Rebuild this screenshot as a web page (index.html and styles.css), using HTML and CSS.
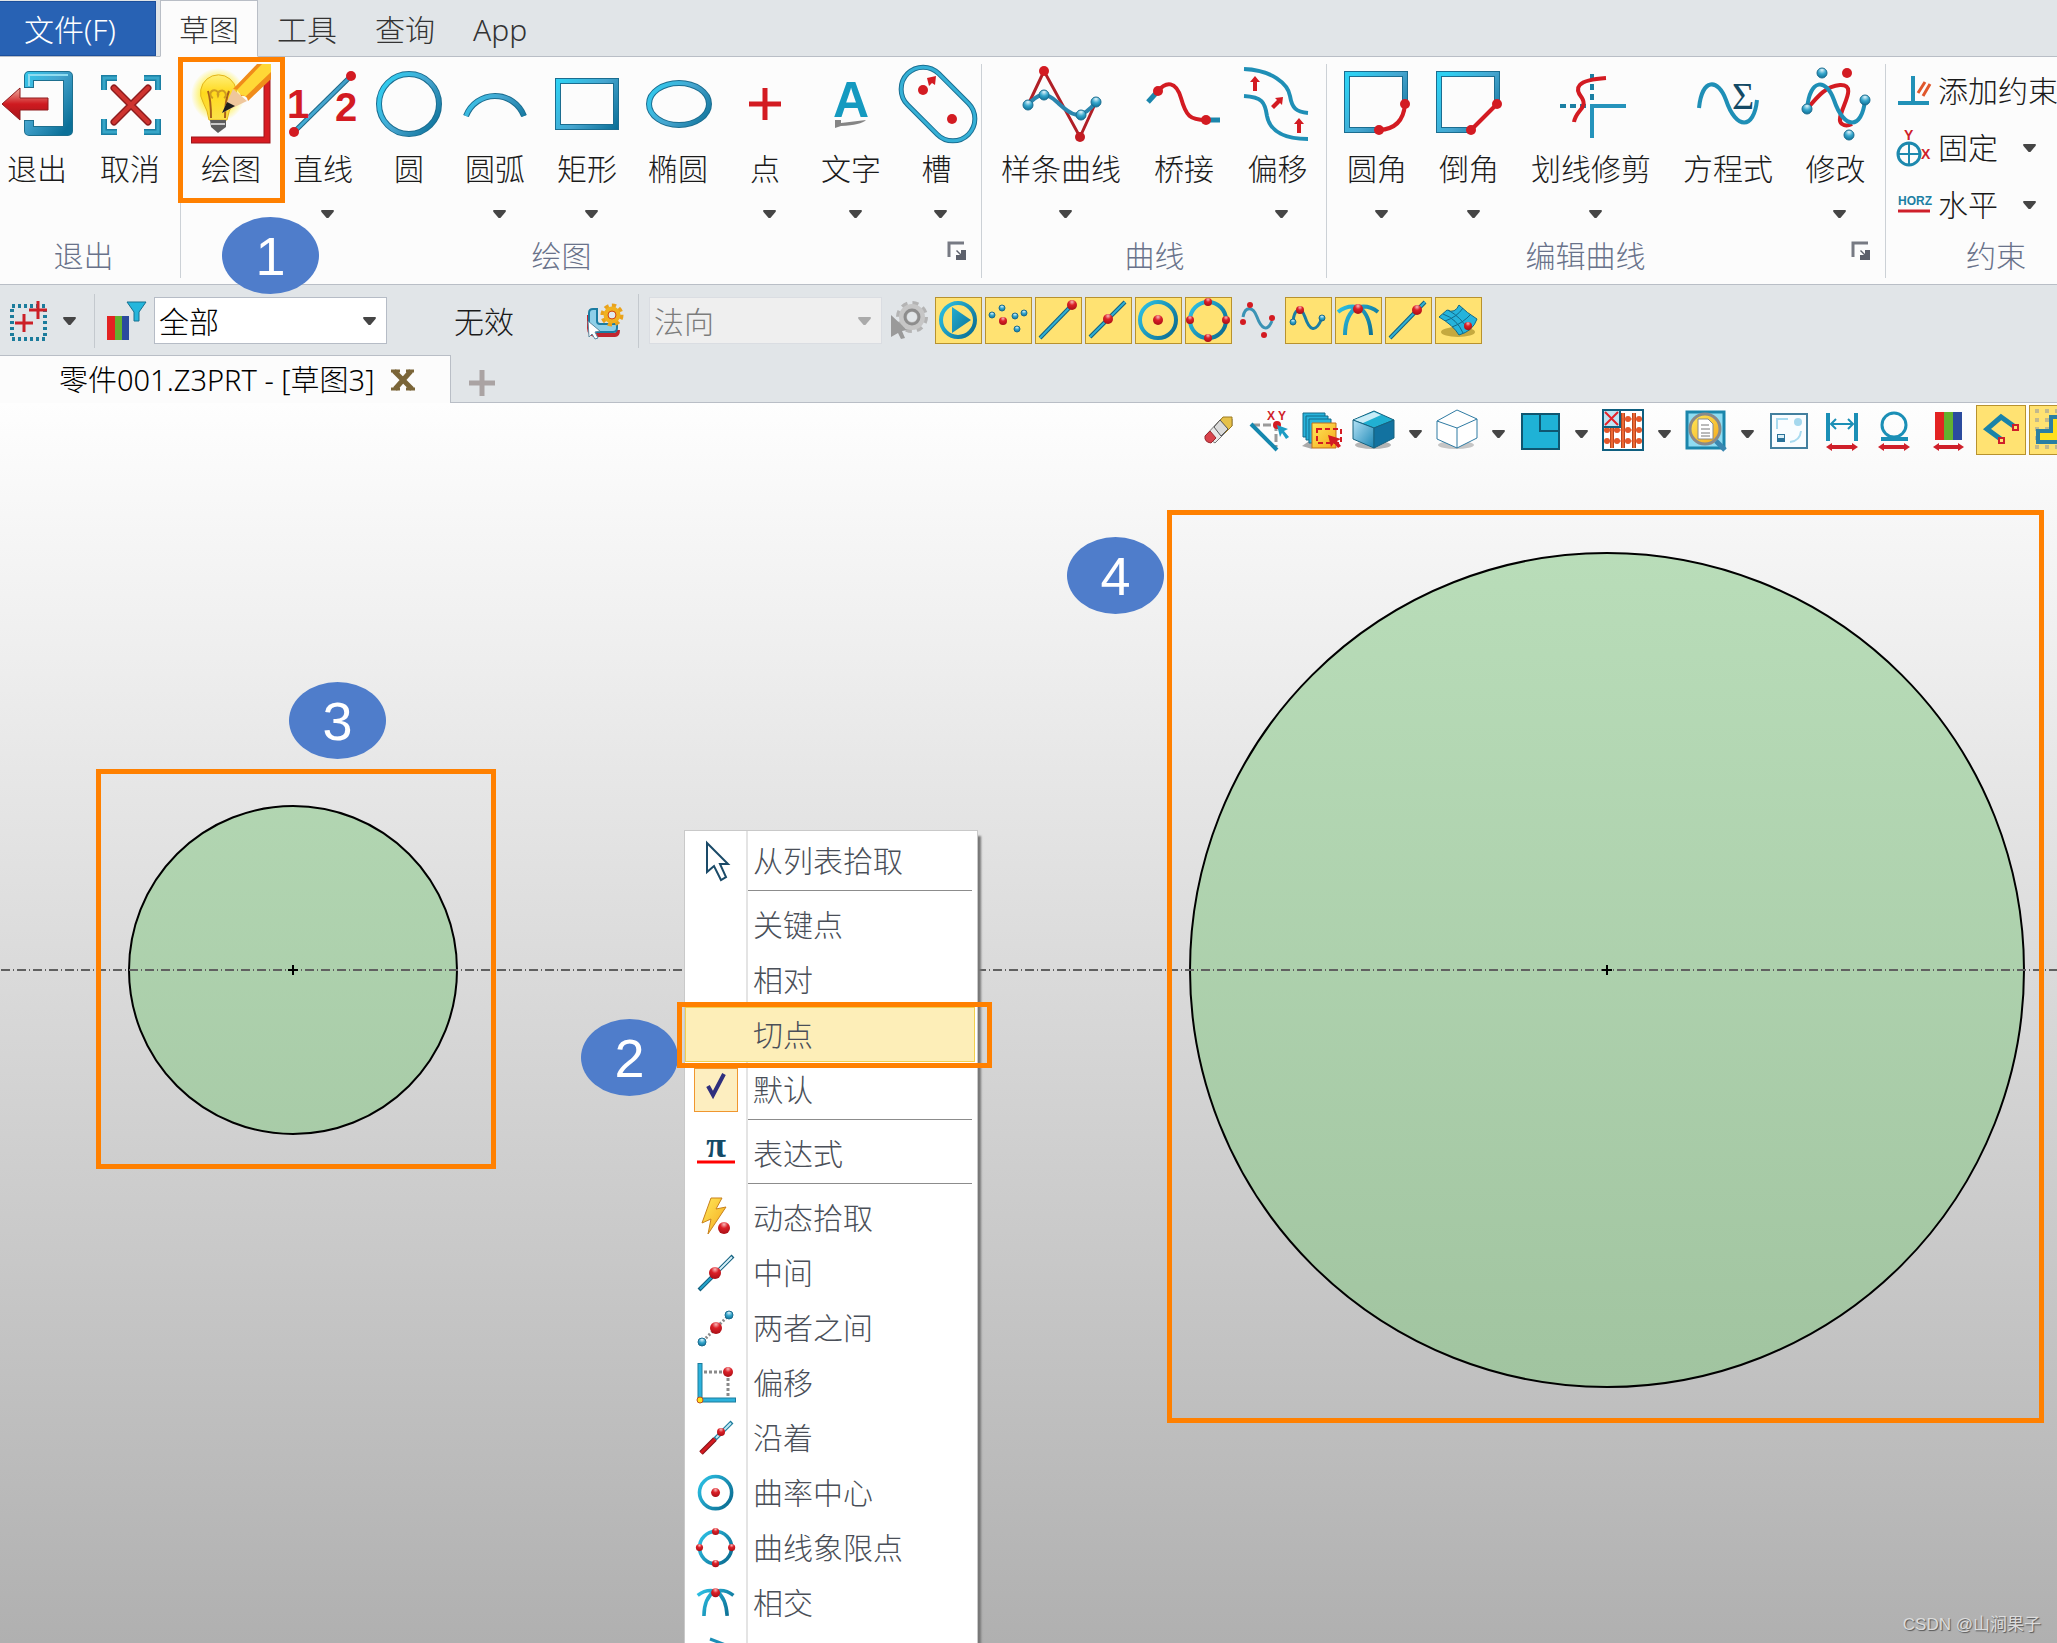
FILE: index.html
```html
<!DOCTYPE html>
<html lang="zh-CN">
<head>
<meta charset="utf-8">
<title>零件001.Z3PRT - [草图3]</title>
<link rel="stylesheet" href="styles.css">
</head>
<body>
<svg class="defs" aria-hidden="true">
  <defs>
    <linearGradient id="gb" gradientUnits="userSpaceOnUse" x1="10" y1="20" x2="70" y2="64"><stop offset="0" stop-color="#2fd0f2"/><stop offset=".5" stop-color="#46a5cf"/><stop offset="1" stop-color="#0b7098"/></linearGradient>
    <linearGradient id="gs" gradientUnits="userSpaceOnUse" x1="4" y1="10" x2="42" y2="36"><stop offset="0" stop-color="#2cc0e4"/><stop offset="1" stop-color="#0b6b90"/></linearGradient>
    <linearGradient id="face" x1="0" y1="0" x2="1" y2="1"><stop offset="0" stop-color="#b4e2f6"/><stop offset="1" stop-color="#1a86b4"/></linearGradient>
    <linearGradient id="redg" x1="0" y1="0" x2="0" y2="1"><stop offset="0" stop-color="#efb0a0"/><stop offset=".5" stop-color="#cf1a20"/><stop offset="1" stop-color="#a51419"/></linearGradient>
    <linearGradient id="gold" x1="0" y1="0" x2="1" y2="1"><stop offset="0" stop-color="#ffe95a"/><stop offset="1" stop-color="#f5a81c"/></linearGradient>
    <linearGradient id="bulb" x1="0" y1="0" x2="0" y2="1"><stop offset="0" stop-color="#fff07a"/><stop offset=".4" stop-color="#ffd91c"/><stop offset="1" stop-color="#fbe04a"/></linearGradient>
    <radialGradient id="rb" cx=".5" cy=".2" r=".8"><stop offset="0" stop-color="#f8b8b8"/><stop offset=".4" stop-color="#dc2028"/><stop offset="1" stop-color="#a80f16"/></radialGradient>
    <radialGradient id="bb" cx=".5" cy=".2" r=".8"><stop offset="0" stop-color="#e2f4fb"/><stop offset=".5" stop-color="#35a6cc"/><stop offset="1" stop-color="#0e6f96"/></radialGradient>
    <radialGradient id="halo"><stop offset=".55" stop-color="#fff04a"/><stop offset="1" stop-color="#fff04a" stop-opacity="0"/></radialGradient>
    <linearGradient id="fillgreen" gradientUnits="userSpaceOnUse" x1="0" y1="150" x2="0" y2="984"><stop offset="0" stop-color="#b9ddb9"/><stop offset="1" stop-color="#a1c4a0"/></linearGradient>
  </defs>
  <symbol id="caret" viewBox="0 0 14 9"><path d="M0 0H14V2L8 9H6L0 2Z" fill="#454545"/></symbol>
  <symbol id="i-center" viewBox="0 0 47 47"><circle class="bs" cx="23" cy="23" r="18"/><circle class="rd" cx="23" cy="23" r="5"/></symbol>
  <symbol id="i-quad" viewBox="0 0 47 47"><circle class="bs" cx="23" cy="23" r="18"/><circle class="rd" cx="23" cy="5" r="4"/><circle class="rd" cx="23" cy="41" r="4"/><circle class="rd" cx="5" cy="23" r="4"/><circle class="rd" cx="41" cy="23" r="4"/></symbol>
  <symbol id="i-cross" viewBox="0 0 47 47"><path class="bs" d="M3 15Q12 8 22 10Q10 18 10 38M43 15Q34 8 24 10Q35 18 36 38"/><circle class="rd" cx="23" cy="12" r="5"/></symbol>
  <symbol id="i-mid" viewBox="0 0 42 42"><path d="M4 38L38 4" stroke="#12607f" stroke-width="4"/><path d="M5 37L22 20" stroke="#25a4cb" stroke-width="2"/><path d="M22 20L37 5" stroke="#d8f1f9" stroke-width="2"/><circle class="rd" cx="20" cy="21" r="6"/></symbol>
  <symbol id="i-launch" viewBox="0 0 20 20"><path d="M2 16V2H17" fill="none" stroke="#777a83" stroke-width="3"/><path d="M10 9L14 13V9H19V19H9V14H13L9 10Z" fill="#5c606b"/></symbol>
</svg>

<header>
  <nav class="ribbon-tabs">
    <button class="file">文件(F)</button>
    <button class="tab active">草图</button>
    <button class="tab">工具</button>
    <button class="tab">查询</button>
    <button class="tab">App</button>
  </nav>

  <div class="ribbon">
    <section class="group g-exit">
      <div class="tools">
        <button class="tool"><svg viewBox="0 0 80 80"><path d="M32 24V12H71V67H32V56" fill="none" stroke="#1d6f8e" stroke-width="10" stroke-linejoin="round"/><path d="M32 23V12H71V67H32V57" fill="none" stroke="url(#gb)" stroke-width="8" stroke-linejoin="round"/><path d="M32 22V11H71" fill="none" stroke="#8fdcf0" stroke-width="2"/><path d="M5 40L23 24V34H51V46H23V56Z" fill="url(#redg)" stroke="#8f1a1d"/></svg>退出</button>
        <button class="tool"><svg viewBox="0 0 80 80"><path d="M14 26V14H27M54 14H68V26M68 55V68H54M27 68H14V55" fill="none" stroke="#1b7fa3" stroke-width="6"/><path d="M14 26V14H27M54 14H68V26M68 55V68H54M27 68H14V55" fill="none" stroke="#37a6c8" stroke-width="3"/><path d="M24 24L58 58M58 24L24 58" stroke="#8f1d1f" stroke-width="7" stroke-linecap="round"/><path d="M24 24L58 58M58 24L24 58" stroke="#cf3430" stroke-width="4" stroke-linecap="round"/></svg>取消</button>
      </div>
      <h2>退出</h2>
    </section>

    <section class="group g-draw">
      <div class="tools">
        <button class="tool"><svg viewBox="0 0 80 80"><path d="M0 76H76V12" fill="none" stroke="#9d151a" stroke-width="7"/><path d="M1 76H76V12" fill="none" stroke="#d71c22" stroke-width="5"/><circle cx="27" cy="31" r="27" fill="url(#halo)"/><path d="M18 56Q17 47 12 38A18 18 0 1 1 43 38Q37 47 36 56Z" fill="url(#bulb)" stroke="#e3b41c"/><path d="M17 27Q20 36 20 54M38 27Q34 36 34 54" fill="none" stroke="#a8601a" stroke-width="2"/><path d="M22 34a4 4 0 1 1 5-2a4 4 0 1 1 6 2" fill="none" stroke="#cf9d20" stroke-width="2"/><path d="M19 56H35V63L27 69L20 63Z" fill="#5d5d5d"/><path d="M20 60H34" stroke="#c9c9c9" stroke-width="2"/><path d="M31 49L42 25L56 37Z" fill="#efc79c"/><path d="M42 25L66 0H80V15L57 37Q56 31 50 32Q49 25 42 25Z" fill="#f08c1a"/><path d="M46 26L71 0H80V8L54 33Q54 31 50 31Z" fill="#ffd836"/><path d="M31 49L36 38L44 42Z" fill="#1e1e1e"/></svg>绘图</button>
        <button class="tool"><svg viewBox="0 0 80 80"><path d="M11 68L68 12" stroke="#1d6585" stroke-width="5"/><path d="M11 68L68 12" stroke="url(#gb)" stroke-width="3"/><circle cx="11" cy="68" r="5" fill="#d31b22"/><circle cx="68" cy="12" r="5" fill="#d31b22"/><text class="num" x="4" y="54">1</text><text class="num" x="52" y="57">2</text></svg>直线<svg class="caret"><use href="#caret"/></svg></button>
        <button class="tool"><svg viewBox="0 0 80 80"><circle class="be" cx="40" cy="40" r="30"/><circle class="bl" cx="40" cy="40" r="30"/></svg>圆</button>
        <button class="tool"><svg viewBox="0 0 80 80"><path class="be" d="M11 52A31 31 0 0 1 69 52"/><path class="bl" d="M11 52A31 31 0 0 1 69 52"/></svg>圆弧<svg class="caret"><use href="#caret"/></svg></button>
        <button class="tool"><svg viewBox="0 0 80 80"><path class="be" d="M11 17H69V63H11Z"/><path class="bl" d="M11 17H69V63H11Z"/></svg>矩形<svg class="caret"><use href="#caret"/></svg></button>
        <button class="tool"><svg viewBox="0 0 80 80"><ellipse class="be" cx="41" cy="40" rx="30" ry="21"/><ellipse class="bl" cx="41" cy="40" rx="30" ry="21"/></svg>椭圆</button>
        <button class="tool"><svg viewBox="0 0 80 80"><path d="M24 40H56M40 24V56" stroke="#d31b22" stroke-width="5"/></svg>点<svg class="caret"><use href="#caret"/></svg></button>
        <button class="tool"><svg viewBox="0 0 80 80"><text class="letter" x="40" y="53">A</text><path d="M24 56H30V59L55 56Q50 61 30 62L24 64Z" fill="#858585"/></svg>文字<svg class="caret"><use href="#caret"/></svg></button>
        <button class="tool"><svg viewBox="0 0 80 80"><g transform="translate(41 40) rotate(45)"><rect x="-43" y="-22" width="86" height="44" rx="22" fill="none" stroke="#1a6f92" stroke-width="5"/><rect x="-43" y="-22" width="86" height="44" rx="22" fill="none" stroke="#35b0d6" stroke-width="3"/></g><circle cx="26" cy="26" r="5" fill="#d31b22"/><circle cx="55" cy="55" r="5" fill="#d31b22"/><path d="M30 14L39 12L38 21L35 19L32 22L31 18Z" fill="#d31b22"/></svg>槽<svg class="caret"><use href="#caret"/></svg></button>
      </div>
      <h2>绘图</h2>
      <button class="launch" aria-label="绘图设置"><svg><use href="#i-launch"/></svg></button>
    </section>

    <section class="group g-curve">
      <div class="tools">
        <button class="tool"><svg viewBox="0 0 80 80"><path d="M7 41L23 7L59 73L75 38" fill="none" stroke="#b01f26" stroke-width="3"/><path d="M7 41C16 30 24 27 36 38S58 60 75 38" fill="none" stroke="#2b86ae" stroke-width="4"/><circle cx="23" cy="7" r="5" fill="#d31b22"/><circle cx="59" cy="73" r="5" fill="#c31b22"/><circle class="bd" cx="7" cy="41" r="5"/><circle class="bd" cx="23" cy="31" r="5"/><circle class="bd" cx="60" cy="51" r="5"/><circle class="bd" cx="75" cy="38" r="5"/></svg>样条曲线<svg class="caret"><use href="#caret"/></svg></button>
        <button class="tool"><svg viewBox="0 0 80 80"><path d="M4 38L14 27M62 56H76" stroke="#1b86ac" stroke-width="5"/><path d="M14 27C22 17 32 17 37 34C42 52 46 56 62 56" fill="none" stroke="#d31b22" stroke-width="4"/><circle cx="14" cy="27" r="5" fill="#d31b22"/><circle cx="62" cy="56" r="5" fill="#d31b22"/></svg>桥接</button>
        <button class="tool"><svg viewBox="0 0 80 80"><path class="bm" d="M6 5C34 6 50 20 52 32C54 44 58 48 70 49M6 32C24 33 27 38 29 52C32 68 48 75 70 75"/><path d="M17 12L22 18H19V27H15V18H12ZM61 54L66 60H63V69H59V60H56ZM45 33L44 41L42 39L36 45L33 42L39 36L37 34Z" fill="#d31b22"/></svg>偏移<svg class="caret"><use href="#caret"/></svg></button>
      </div>
      <h2>曲线</h2>
    </section>

    <section class="group g-edit">
      <div class="tools">
        <button class="tool"><svg viewBox="0 0 80 80"><path class="be" d="M42 66H10V10H68V40"/><path class="bl" d="M42 66H10V10H68V40"/><path d="M42 66Q66 65 68 40" fill="none" stroke="#d31b22" stroke-width="4"/><circle cx="42" cy="66" r="5" fill="#d31b22"/><circle cx="68" cy="40" r="5" fill="#d31b22"/></svg>圆角<svg class="caret"><use href="#caret"/></svg></button>
        <button class="tool"><svg viewBox="0 0 80 80"><path class="be" d="M42 66H10V10H68V40"/><path class="bl" d="M42 66H10V10H68V40"/><path d="M42 66L68 40" stroke="#d31b22" stroke-width="4"/><circle cx="42" cy="66" r="5" fill="#d31b22"/><circle cx="68" cy="40" r="5" fill="#d31b22"/></svg>倒角<svg class="caret"><use href="#caret"/></svg></button>
        <button class="tool"><svg viewBox="0 0 80 80"><path d="M41 74V42H75" fill="none" stroke="#2593bb" stroke-width="4"/><path d="M41 36V6M35 42H5" stroke="#1b7fa3" stroke-width="4" stroke-dasharray="6 4"/><path d="M55 14C25 16 23 24 31 34C37 44 25 46 23 58" fill="none" stroke="#d31b22" stroke-width="4"/></svg>划线修剪<svg class="caret"><use href="#caret"/></svg></button>
        <button class="tool"><svg viewBox="0 0 80 80"><text x="44" y="45" class="sigma">Σ</text><path class="bm" d="M11 44C14 14 30 14 38 36C48 66 66 66 69 36"/></svg>方程式</button>
        <button class="tool"><svg viewBox="0 0 80 80"><path d="M11 45C22 32 30 22 44 21C66 20 36 54 46 60Q50 63 56 60" fill="none" stroke="#d31b22" stroke-width="4"/><path class="bm" d="M11 45C14 14 30 14 38 36C48 66 66 66 69 36"/><circle class="bd" cx="26" cy="9" r="5"/><circle cx="51" cy="9" r="5" fill="#d31b22"/><circle class="bd" cx="53" cy="71" r="5"/><circle class="bd" cx="11" cy="45" r="5"/><circle class="bd" cx="69" cy="36" r="5"/></svg>修改<svg class="caret"><use href="#caret"/></svg></button>
      </div>
      <h2>编辑曲线</h2>
      <button class="launch" aria-label="编辑曲线设置"><svg><use href="#i-launch"/></svg></button>
    </section>

    <section class="group g-cons">
      <div class="rows">
        <button class="row"><svg viewBox="0 0 36 36"><path d="M2 30H33M17 28V3" stroke="#2191b7" stroke-width="4"/><path d="M22 20L29 9M27 23L34 11" stroke="#e0572c" stroke-width="3"/></svg>添加约束</button>
        <button class="row"><svg viewBox="0 0 36 36"><circle cx="13" cy="24" r="11" fill="none" stroke="#1d89ae" stroke-width="3"/><path d="M13 13V35M2 24H24" stroke="#1d89ae" stroke-width="2"/><text class="axis red" x="8" y="10">Y</text><text class="axis red" x="25" y="29">X</text></svg>固定<svg class="caret"><use href="#caret"/></svg></button>
        <button class="row"><svg viewBox="0 0 36 36"><text class="tiny blue" x="2" y="18">HORZ</text><path d="M2 24H34" stroke="#cf1f2a" stroke-width="3"/></svg>水平<svg class="caret"><use href="#caret"/></svg></button>
      </div>
      <h2>约束</h2>
    </section>
  </div>

  <div class="optionbar">
    <button class="opt" aria-label="拾取"><svg class="i40" viewBox="0 0 40 40"><path d="M3 5H36V38H3Z" fill="none" stroke="#1c7c9c" stroke-width="4" stroke-dasharray="3 3"/><path d="M6 22H24M15 13V31M20 9H38M29 0V18" stroke="#cc2027" stroke-width="3"/></svg><svg class="caret"><use href="#caret"/></svg></button>
    <i class="sep"></i>
    <svg class="i40 filter" viewBox="0 0 40 40"><path d="M0 15H8V39H0Z" fill="#e32322"/><path d="M8 15H15V39H8Z" fill="#63b12f"/><path d="M15 15H22V39H15Z" fill="#2b4b9e"/><path d="M20 1H39L32 11V20H27V11Z" fill="#25b6dc" stroke="#17708f"/></svg>
    <span class="combo wide"><select aria-label="过滤器"><option>全部</option></select><svg class="caret"><use href="#caret"/></svg></span>
    <span class="status">无效</span>
    <button class="opt pick" aria-label="拾取设置"><svg class="i40" viewBox="0 0 40 40"><path d="M4 14V27Q4 34 12 34H30Q33 34 33 29" fill="none" stroke="#c02630" stroke-width="4"/><path d="M4 12Q4 8 8 8H12V20Q12 23 15 23H32V27Q32 31 28 31H12Q4 31 4 24Z" fill="#8fcfe8" stroke="#1a7ca2" stroke-width="2"/><circle cx="27" cy="14" r="9" fill="none" stroke="#e9a21c" stroke-width="5" stroke-dasharray="4 3"/><circle cx="27" cy="14" r="6" fill="#dfe9ee" stroke="#f0b11f" stroke-width="5"/><circle cx="27" cy="14" r="4" fill="none" stroke="#d2471c"/><path d="M3 20L15 30L10 31L13 37L10 38L7 33L4 36Z" fill="#fff" stroke="#5d89a0"/></svg></button>
    <i class="sep"></i>
    <span class="combo disabled"><select aria-label="方向" disabled><option>法向</option></select><svg class="caret"><use href="#caret"/></svg></span>
    <svg class="i40 gear" viewBox="0 0 40 40"><circle cx="22" cy="16" r="14" fill="none" stroke="#b4b4b4" stroke-width="4" stroke-dasharray="6 5"/><circle cx="22" cy="16" r="9" fill="none" stroke="#c6c6c6" stroke-width="8"/><circle cx="22" cy="16" r="7" fill="none" stroke="#8d8d8d" stroke-width="3"/><path d="M1 14L17 29L12 30L15 37L11 38L8 32L1 36Z" fill="#9a9a9a"/></svg>
    <div class="snaps">
      <button class="snap on" aria-label="播放"><svg viewBox="0 0 47 47"><circle class="bs" cx="23" cy="23" r="17"/><path d="M17 10L36 23L17 36Z" fill="url(#gs)"/></svg></button>
      <button class="snap on" aria-label="点"><svg viewBox="0 0 47 47"><circle class="bd" cx="17" cy="11" r="3"/><circle class="bd" cx="7" cy="18" r="3"/><circle class="bd" cx="30" cy="19" r="3"/><circle class="bd" cx="39" cy="16" r="3"/><circle class="bd" cx="32" cy="32" r="3"/><circle class="rd" cx="18" cy="24" r="4"/></svg></button>
      <button class="snap on" aria-label="端点"><svg viewBox="0 0 47 47"><path class="edge" d="M5 41L37 8"/><path class="core" d="M5 41L37 8"/><circle class="rd" cx="37" cy="8" r="5"/></svg></button>
      <button class="snap on" aria-label="中点"><svg viewBox="0 0 47 47"><path class="edge" d="M5 40L40 5"/><path class="core" d="M5 40L40 5"/><circle class="rd" cx="23" cy="22" r="5"/></svg></button>
      <button class="snap on" aria-label="圆心"><svg><use href="#i-center"/></svg></button>
      <button class="snap on" aria-label="象限点"><svg><use href="#i-quad"/></svg></button>
      <button class="snap" aria-label="曲线"><svg viewBox="0 0 47 47"><path d="M8 20C10 9 18 9 22 20S32 36 37 24" fill="none" stroke="#3b93b5" stroke-width="3"/><circle cx="8" cy="25" r="3" fill="#d31b22"/><circle cx="15" cy="8" r="3" fill="#d31b22"/><circle cx="37" cy="21" r="3" fill="#d31b22"/><circle cx="29" cy="38" r="3" fill="#d31b22"/></svg></button>
      <button class="snap on" aria-label="样条点"><svg viewBox="0 0 47 47"><path d="M8 25C9 12 16 8 20 20S30 38 37 21" fill="none" stroke="#1a7ea4" stroke-width="3"/><circle class="bd" cx="8" cy="25" r="3"/><circle class="bd" cx="37" cy="21" r="3"/><circle class="rd" cx="15" cy="13" r="4"/></svg></button>
      <button class="snap on" aria-label="相交"><svg><use href="#i-cross"/></svg></button>
      <button class="snap on" aria-label="线上"><svg viewBox="0 0 47 47"><path class="edge" d="M5 41L40 5"/><path class="core" d="M5 41L40 5"/><circle class="rd" cx="32" cy="13" r="5"/></svg></button>
      <button class="snap on" aria-label="曲面"><svg viewBox="0 0 47 47"><ellipse cx="23" cy="35" rx="17" ry="5" fill="#c5a93f"/><path d="M4 20L12 13Q20 17 24 8Q32 16 42 22Q38 34 24 38Q18 28 4 20Z" fill="#25b4dc" stroke="#126a8a"/><path d="M8 17Q22 22 28 36M13 13Q26 20 34 34M10 24Q22 20 28 11M17 30Q28 26 36 17" fill="none" stroke="#126a8a"/><circle class="rd" cx="33" cy="29" r="4"/></svg></button>
    </div>
  </div>

  <div class="doc-tabs">
    <div class="doc"><span>零件001.Z3PRT - [草图3]</span><button aria-label="关闭"><svg viewBox="0 0 26 22"><path d="M4 2L22 20M21 2L5 20" stroke="#7a6538" stroke-width="5"/><path d="M1 2H10M16 2H24M1 20H10M16 20H25" stroke="#7a6538" stroke-width="3"/></svg></button></div>
    <button class="add" aria-label="新建"><svg viewBox="0 0 26 26"><path d="M0 13H26M13 0V26" stroke="#aaa3a3" stroke-width="5"/></svg></button>
  </div>
</header>

<main class="canvas">
  <svg class="sketch" aria-hidden="true">
    <circle cx="293" cy="567" r="164" fill="url(#fillgreen)" stroke="#000" stroke-width="2"/>
    <circle cx="1607" cy="567" r="417" fill="url(#fillgreen)" stroke="#000" stroke-width="2"/>
    <line x1="1" y1="567" x2="100%" y2="567" stroke="#606060" stroke-width="2" stroke-dasharray="9 3 1 3"/>
    <path d="M288 567H298M293 562V572M1602 567H1612M1607 562V572" stroke="#000" stroke-width="2"/>
  </svg>

  <div class="viewbar">
    <button aria-label="擦除"><svg viewBox="0 0 42 42"><path d="M8 27L24 10H35V17L18 34Z" fill="#e8e8e8" stroke="#777"/><path d="M20 15L26 8H35V17L28 24Z" fill="#e6c14a" stroke="#9b7b22"/><path d="M17 18L23 11L31 20L24 27Z" fill="#dcdcdc" stroke="#555"/><path d="M13 22L8 27Q7 33 14 34L19 29Z" fill="#d8434c" stroke="#982a30"/></svg></button>
    <button aria-label="XY"><svg viewBox="0 0 42 42"><path d="M3 16H27V38" fill="none" stroke="#9a9a9a" stroke-width="3" stroke-dasharray="8 3"/><path d="M2 15L28 41" stroke="#1587ae" stroke-width="4"/><circle cx="28" cy="16" r="4" fill="#d31b22"/><path d="M28 16L39 20L35 22L40 28L37 30L33 24L31 28Z" fill="#1c9cc4"/><text class="tiny red" x="18" y="11">X</text><text class="tiny red" x="29" y="11">Y</text></svg></button>
    <button aria-label="图层"><svg viewBox="0 0 42 42"><path d="M1 37L11 40V30Z" fill="#aaa"/><path d="M2 4H24V28H2Z" fill="#27b4dc" stroke="#126a8a"/><path d="M5 7H27V31H5Z" fill="#27b4dc" stroke="#126a8a"/><path d="M8 10H30V34H8Z" fill="#27b4dc" stroke="#126a8a"/><path d="M11 14H35V39H11Z" fill="url(#gold)" stroke="#c4701a"/><path d="M16 20H40V34H16Z" fill="none" stroke="#d31b22" stroke-width="2" stroke-dasharray="5 3"/><path d="M27 26L40 30L36 32L40 37L37 39L33 34L30 38Z" fill="#d31b22"/></svg></button>
    <button aria-label="着色"><svg viewBox="0 0 42 42"><ellipse cx="20" cy="36" rx="18" ry="4" fill="#b5b5b5"/><path d="M0 11L21 2L41 11L21 19Z" fill="#21b0d2" stroke="#16627f"/><path d="M1 11L21 3L28 6L10 14Z" fill="#c9ecf7"/><path d="M0 11L21 19V39L0 30Z" fill="url(#face)" stroke="#16627f"/><path d="M41 11L21 19V39L41 29Z" fill="#1272a0" stroke="#16627f"/></svg></button>
    <button class="dd" aria-label="更多"><svg class="caret"><use href="#caret"/></svg></button>
    <button aria-label="线框"><svg viewBox="0 0 42 42"><ellipse cx="20" cy="36" rx="18" ry="4" fill="#c5c5c5"/><path d="M1 12L21 1L41 10V29L21 39L1 30Z" fill="#fff" stroke="#2f7ba3"/><path d="M1 12L21 19L41 10M21 19V39" fill="none" stroke="#2f7ba3"/></svg></button>
    <button class="dd" aria-label="更多"><svg class="caret"><use href="#caret"/></svg></button>
    <button aria-label="视图"><svg viewBox="0 0 42 42"><path d="M3 5H40V40H3Z" fill="#1fb2d6" stroke="#0f5670" stroke-width="2"/><path d="M21 5V22H40" fill="none" stroke="#0f5670" stroke-width="2"/></svg></button>
    <button class="dd" aria-label="更多"><svg class="caret"><use href="#caret"/></svg></button>
    <button aria-label="栅格"><svg viewBox="0 0 42 42"><path d="M1 1H41V41H1Z" fill="#fff" stroke="#0f5f80" stroke-width="2"/><path d="M10 18V39M21 4V39M32 4V39" stroke="#b5461f" stroke-width="4"/><path d="M10 18V39M21 4V39M32 4V39" stroke="#ee6a35" stroke-width="2"/><path d="M4 21H39M4 32H39M20 10H39" stroke="#e4572a"/><g fill="#e4572a"><circle cx="5" cy="21" r="3"/><circle cx="15" cy="21" r="3"/><circle cx="26" cy="21" r="3"/><circle cx="37" cy="21" r="3"/><circle cx="5" cy="32" r="3"/><circle cx="15" cy="32" r="3"/><circle cx="26" cy="32" r="3"/><circle cx="37" cy="32" r="3"/><circle cx="26" cy="10" r="3"/><circle cx="37" cy="10" r="3"/></g><path d="M1 1H18V18H1Z" fill="#bfe4f3" stroke="#0f5f80" stroke-width="2"/><path d="M3 3L16 16M16 3L3 16" stroke="#e3222a" stroke-width="2"/></svg></button>
    <button class="dd" aria-label="更多"><svg class="caret"><use href="#caret"/></svg></button>
    <button aria-label="缩放"><svg viewBox="0 0 42 42"><path d="M2 3H39V39H2Z" fill="#8fdcf2" stroke="#1b86ac" stroke-width="3"/><circle cx="20" cy="20" r="15" fill="url(#gold)" stroke="#8a8a8a" stroke-width="3"/><path d="M13 10H23L28 15V30H13Z" fill="#fff" stroke="#8a8a8a"/><path d="M16 16H24M16 20H25M16 24H25M16 27H25" stroke="#777"/><path d="M31 32L40 41" stroke="#3a87b0" stroke-width="5"/></svg></button>
    <button class="dd" aria-label="更多"><svg class="caret"><use href="#caret"/></svg></button>
    <button aria-label="窗口"><svg viewBox="0 0 42 42"><path d="M3 5H39V39H3Z" fill="#fafdff" stroke="#44809f" stroke-width="2"/><path d="M9 20V10H20M33 22Q32 32 22 33" fill="none" stroke="#a9dbf0" stroke-width="2"/><circle cx="30" cy="13" r="4" fill="#a5d8ee"/><path d="M9 25H17V33H9Z" fill="#2a7299"/><path d="M10 26H16V29H10Z" fill="#d8eef7"/></svg></button>
    <button aria-label="距离"><svg viewBox="0 0 42 42"><path d="M8 4V32M36 4V32" stroke="#1b8fb6" stroke-width="4"/><path d="M12 15H32M16 10L11 15L16 20M28 10L33 15L28 20" fill="none" stroke="#1b8fb6" stroke-width="2"/><path d="M6 38L12 34V36H32V34L38 38L32 42V40H12V42Z" fill="#cf1f2a"/></svg></button>
    <button aria-label="直径"><svg viewBox="0 0 42 42"><circle cx="22" cy="16" r="12" fill="none" stroke="#1b8fb6" stroke-width="3"/><path d="M9 30H36" stroke="#1b8fb6" stroke-width="4"/><path d="M6 38L12 34V36H32V34L38 38L32 42V40H12V42Z" fill="#cf1f2a"/></svg></button>
    <button aria-label="颜色"><svg viewBox="0 0 42 42"><path d="M11 3H20V31H11Z" fill="#e32322"/><path d="M20 3H29V31H20Z" fill="#63b12f"/><path d="M29 3H38V31H29Z" fill="#2b4b9e"/><path d="M9 38L15 34V36H34V34L40 38L34 42V40H15V42Z" fill="#cf1f2a"/></svg></button>
    <div class="toggles">
      <button class="on" aria-label="轮廓"><svg viewBox="0 0 50 50"><path d="M39 22L25 12L11 24L26 35" fill="none" stroke="#1a83a8" stroke-width="5"/><path d="M37 20H42V25H37ZM23 33H28V38H23Z" fill="#ffe272" stroke="#cf1f2a" stroke-width="2"/></svg></button>
      <button class="on" aria-label="区域"><svg viewBox="0 0 50 50"><path d="M6 6H50M6 15H50M6 24H50M6 33H50M6 42H50" stroke="#c3b98c" stroke-width="4" stroke-dasharray="4 6"/><path d="M50 12H22V26H9V37H50Z" fill="#ffe01e" stroke="#2a7fa3" stroke-width="4"/></svg></button>
    </div>
  </div>

  <menu class="context">
    <li><button><svg viewBox="0 0 42 42"><path d="M12 3V32L19 26L26 40L31 37L25 24H33Z" fill="#fff" stroke="#1a4a68" stroke-width="2"/></svg>从列表拾取</button></li>
    <li class="line"></li>
    <li><button><svg></svg>关键点</button></li>
    <li><button><svg></svg>相对</button></li>
    <li><button class="hot"><svg></svg>切点</button></li>
    <li><button><svg class="checked" viewBox="0 0 42 42"><path d="M13 17L18 26L29 5" fill="none" stroke="#2f2f7e" stroke-width="4"/></svg>默认</button></li>
    <li class="line"></li>
    <li><button><svg viewBox="0 0 42 42"><text class="pi" x="21" y="24">π</text><path d="M2 29H40" stroke="#ff0000" stroke-width="3"/></svg>表达式</button></li>
    <li class="line"></li>
    <li><button><svg viewBox="0 0 42 42"><path d="M16 1H27L21 12L31 10L13 37L16 22L7 26Z" fill="url(#gold)" stroke="#c8811c"/><circle class="rd" cx="29" cy="31" r="6"/></svg>动态拾取</button></li>
    <li><button><svg><use href="#i-mid"/></svg>中间</button></li>
    <li><button><svg viewBox="0 0 42 42"><path d="M8 34L34 8" stroke="#8a8a8a" stroke-width="3" stroke-dasharray="2 2"/><circle class="bd" cx="7" cy="35" r="4"/><circle class="bd" cx="34" cy="8" r="4"/><circle class="rd" cx="21" cy="21" r="6"/></svg>两者之间</button></li>
    <li><button><svg viewBox="0 0 42 42"><path d="M5 1V37M5 38H41" stroke="#1c7c9c" stroke-width="5"/><path d="M5 2V37M5 38H40" stroke="#2cb2dc" stroke-width="3"/><path d="M9 10H33V36" fill="none" stroke="#8a8a8a" stroke-width="3" stroke-dasharray="3 2"/><circle class="rd" cx="33" cy="10" r="5"/><circle cx="5" cy="38" r="3" fill="#ffe01e" stroke="#c0501c"/></svg>偏移</button></li>
    <li><button><svg viewBox="0 0 42 42"><path d="M20 22L37 5" stroke="#1c7c9c" stroke-width="4"/><path d="M21 21L36 6" stroke="#bfe8f5" stroke-width="2"/><path d="M6 36L20 22" stroke="#7d1216" stroke-width="5"/><path d="M6 36L20 22" stroke="#d31b22" stroke-width="3"/><circle class="rd" cx="26" cy="15" r="4"/></svg>沿着</button></li>
    <li><button><svg><use href="#i-center"/></svg>曲率中心</button></li>
    <li><button><svg><use href="#i-quad"/></svg>曲线象限点</button></li>
    <li><button><svg><use href="#i-cross"/></svg>相交</button></li>
    <li><button aria-label="更多"><svg viewBox="0 0 42 42"><path d="M15 2L36 10L22 24" fill="none" stroke="#1c8fb6" stroke-width="3"/></svg></button></li>
  </menu>
  <p class="watermark">CSDN @山涧果子</p>
</main>

<div class="notes">
  <b class="badge n1">1</b><i class="frame f1"></i>
  <b class="badge n2">2</b><i class="frame f2"></i>
  <b class="badge n3">3</b><i class="frame f3"></i>
  <b class="badge n4">4</b><i class="frame f4"></i>
</div>
</body>
</html>
```
FILE: styles.css
```css
* { box-sizing: border-box; }

body {
  position: relative;
  display: flex;
  flex-direction: column;
  height: 100vh;
  margin: 0;
  overflow: hidden;
  background: #e1e5e8;
  color: #1a1a1a;
  font: 300 30px/36px "Noto Sans", "Noto Sans CJK SC", sans-serif;
}

button {
  margin: 0;
  padding: 0;
  border: 0;
  background: none;
  color: inherit;
  font: inherit;
  white-space: nowrap;
}

header { flex: none; }
svg { flex: none; display: block; overflow: visible; }
.defs { position: absolute; width: 0; height: 0; }
.caret { width: 13px; height: 8px; }

/* icon strokes */
.be { fill: none; stroke: #1b6d90; stroke-width: 6; }
.bl { fill: none; stroke: url(#gb); stroke-width: 4; }
.bm { fill: none; stroke: #1f8fb6; stroke-width: 4; }
.bs { fill: none; stroke: url(#gs); stroke-width: 4; }
.edge { stroke: #12607f; stroke-width: 4; }
.core { stroke: #2fb0d4; stroke-width: 2; }
.rd { fill: url(#rb); }
.bd { fill: url(#bb); stroke: #1b6d90; }
.num { fill: #d31b22; font: bold 40px "Liberation Sans", sans-serif; }
.letter { fill: #159ac0; font: bold 50px "Liberation Sans", sans-serif; text-anchor: middle; }
.sigma { fill: #134a66; font: 38px "Liberation Serif", serif; }
.pi { fill: #134a66; font: bold 36px "Liberation Serif", serif; text-anchor: middle; }
.tiny { font: bold 12px "Liberation Sans", sans-serif; }
.axis { font: bold 14px "Liberation Sans", sans-serif; }
.red { fill: #cf1f2a; }
.blue { fill: #1b7fa3; }

/* ribbon tabs */
.ribbon-tabs {
  display: flex;
  height: 57px;
  border-bottom: 1px solid #b9bec6;
}
.file {
  width: 156px;
  height: 55px;
  margin: 1px 4px 0 0;
  padding: 2px 0 0 24px;
  border: 1px solid #1c4f9c;
  border-left: 0;
  background: #2862b4;
  color: #fff;
  text-align: left;
}
.tab {
  height: 57px;
  padding: 2px 18px 0;
  border: 1px solid transparent;
  color: #333;
}
.tab.active {
  border-color: #b9bec6;
  border-bottom-color: #fcfcfc;
  background: #fcfcfc;
}

/* ribbon */
.ribbon {
  display: flex;
  height: 228px;
  border-bottom: 1px solid #b9bec6;
  background: #fcfcfc;
  overflow: hidden;
}
.group {
  position: relative;
  flex: none;
  display: flex;
  flex-direction: column;
  padding-top: 7px;
}
.group::after {
  content: "";
  position: absolute;
  top: 7px;
  right: 0;
  bottom: 6px;
  width: 1px;
  background: #ccd1d6;
}
.group:last-child::after { display: none; }
.group h2 {
  margin: 0;
  color: #69728a;
  font-size: 30px;
  font-weight: 300;
  text-align: center;
}
.tools { display: grid; height: 174px; }
.g-exit { width: 181px; }
.g-exit .tools { grid-template-columns: 74px 92px; gap: 10px; }
.g-exit h2 { padding-right: 14px; }
.g-draw .tools { grid-template-columns: 100px 84px 88px 84px 100px 82px 92px 80px 91px; }
.g-draw h2 { padding-right: 40px; }
.g-curve .tools { grid-template-columns: 158px 88px 99px; }
.g-edit .tools { grid-template-columns: 100px 84px 160px 114px 101px; }
.g-edit h2 { padding-right: 42px; }
.g-cons { width: 220px; padding-top: 5px; }
.tool {
  display: flex;
  flex-direction: column;
  align-items: center;
}
.tool svg:first-child { width: 80px; height: 80px; margin-bottom: 7px; }
.tool .caret { margin: 23px 0 0 8px; }
.launch {
  position: absolute;
  right: 15px;
  bottom: 23px;
}
.launch svg { width: 20px; height: 20px; }
.rows { height: 176px; padding-left: 10px; }
.row {
  display: flex;
  align-items: center;
  height: 57px;
}
.row svg:first-child { width: 36px; height: 36px; margin-right: 6px; }
.row .caret { margin-left: 25px; }

/* option bar */
.optionbar {
  display: flex;
  align-items: center;
  height: 70px;
  padding: 1px 0 0 9px;
}
.i40 { width: 40px; height: 40px; }
.opt { display: flex; align-items: center; gap: 14px; }
.sep { width: 1px; height: 54px; margin: 0 12px 0 18px; background: #c4c9ce; }
.combo {
  position: relative;
  display: flex;
  align-items: center;
  width: 233px;
  height: 47px;
}
.combo.wide { margin-left: 7px; }
.combo select {
  width: 100%;
  height: 100%;
  padding: 2px 4px 0;
  border: 1px solid #b6bcc6;
  border-radius: 0;
  appearance: none;
  background: #fff;
  color: #000;
  font: inherit;
}
.combo .caret { position: absolute; right: 11px; }
.combo.disabled select {
  border-color: #dadde2;
  background: #efefef;
  color: #7c7c7c;
  opacity: 1;
}
.combo.disabled .caret { opacity: .4; }
.status { width: 131px; margin-left: 67px; padding-top: 3px; }
.pick + .sep { margin: 0 10px 0 13px; }
.gear { margin: 0 5px 0 8px; }
.snaps { display: flex; gap: 3px; }
.snap { width: 47px; height: 47px; }
.snap svg { width: 47px; height: 47px; }
.on { background: #ffe272; outline: 1px solid #b8922e; outline-offset: -1px; }

/* document tabs */
.doc-tabs {
  display: flex;
  height: 48px;
  border-bottom: 1px solid #b9bec6;
}
.doc {
  display: flex;
  align-items: center;
  justify-content: space-between;
  width: 451px;
  height: 48px;
  padding: 0 34px 0 59px;
  border: 1px solid #b9bec6;
  border-width: 1px 1px 0 0;
  background: #fcfcfc;
  color: #000;
  font-size: 29px;
}
.doc svg { width: 26px; height: 22px; }
.add { margin: 8px 0 0 18px; }
.add svg { width: 26px; height: 26px; }

/* drawing area */
.canvas {
  position: relative;
  flex: 1;
  min-height: 0;
  overflow: hidden;
  background: linear-gradient(#fefefe, #b0b0b0);
}
.sketch { position: absolute; inset: 0; width: 100%; height: 100%; }
.viewbar {
  position: relative;
  display: flex;
  align-items: center;
  gap: 10px;
  height: 54px;
  padding-left: 1197px;
}
.viewbar button { flex: none; }
.viewbar > button > svg { width: 42px; height: 42px; }
.viewbar .dd { width: 21px; padding: 8px 4px 0; }
.viewbar .dd .caret { width: 13px; height: 8px; }
.toggles { display: flex; gap: 3px; }
.toggles svg { width: 50px; height: 50px; }

.context {
  position: absolute;
  top: 427px;
  left: 684px;
  width: 294px;
  margin: 0;
  padding: 2px 0 0;
  border: 1px solid #c9c9c9;
  background: linear-gradient(90deg, #fff 61px, #e4e4e4 61px, #e4e4e4 63px, #fff 63px);
  box-shadow: 3px 6px 2px #777;
  color: #4a4f58;
  list-style: none;
}
.context button {
  display: flex;
  align-items: center;
  gap: 16px;
  width: 290px;
  height: 55px;
  padding-left: 10px;
}
.context svg { width: 42px; height: 42px; }
.context .hot { background: #fdeeb8; outline: 1px solid #f2cf4c; outline-offset: -1px; }
.context .checked { background: #fdeec0; outline: 1px solid #f0962e; }
.context .line {
  height: 7px;
  margin: 2px 5px 0 63px;
  border-top: 1px solid #8c8c8c;
}
.watermark {
  position: absolute;
  right: 16px;
  bottom: 4px;
  margin: 0;
  color: #dcdcdc;
  font: 17px/28px "Liberation Sans", "Noto Sans CJK SC", sans-serif;
  text-shadow: 1px 1px 1px #555;
}

/* numbered callouts */
.notes { position: absolute; inset: 0; pointer-events: none; }
.frame { position: absolute; border: 5px solid #ff8000; }
.f1 { left: 178px; top: 57px; width: 107px; height: 146px; }
.f2 { left: 677px; top: 1002px; width: 315px; height: 66px; }
.f3 { left: 96px; top: 769px; width: 400px; height: 400px; }
.f4 { left: 1167px; top: 510px; width: 877px; height: 913px; }
.badge {
  position: absolute;
  width: 97px;
  height: 77px;
  border-radius: 50%;
  background: #4f7dcb;
  color: #fff;
  font: 400 54px/78px "Liberation Sans", sans-serif;
  text-align: center;
}
.n1 { left: 222px; top: 217px; }
.n2 { left: 581px; top: 1019px; }
.n3 { left: 289px; top: 682px; }
.n4 { left: 1067px; top: 537px; }
```
